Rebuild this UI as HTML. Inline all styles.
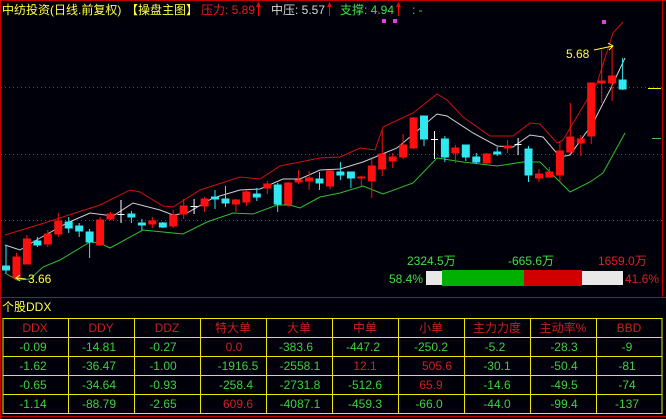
<!DOCTYPE html>
<html><head><meta charset="utf-8"><style>
html,body{margin:0;padding:0;background:#000008;width:666px;height:419px;overflow:hidden}
svg{display:block}
text{font-family:"Liberation Sans","Noto Sans CJK SC",sans-serif;font-size:12px}
</style></head><body>
<svg width="666" height="419" viewBox="0 0 666 419" xmlns="http://www.w3.org/2000/svg">
<rect width="666" height="419" fill="#00000a"/>
<line x1="0" y1="0.5" x2="666" y2="0.5" stroke="#c00000"/>
<line x1="0.5" y1="0" x2="0.5" y2="419" stroke="#c00000"/>
<line x1="662.5" y1="0" x2="662.5" y2="297" stroke="#c00000"/>
<line x1="0" y1="297.5" x2="666" y2="297.5" stroke="#c00000"/>
<line x1="0" y1="416.5" x2="666" y2="416.5" stroke="#c00000"/>
<text x="2" y="14" fill="#ffff40">中纺投资(日线.前复权)</text>
<text x="126" y="14" fill="#ffff40">【操盘主图】</text>
<text x="201" y="14" fill="#e02020">压力: 5.89</text>
<text x="271" y="14" fill="#d8d8d8">中压: 5.57</text>
<text x="340" y="14" fill="#40e040">支撑: 4.94</text>
<text x="412" y="14" fill="#40e040">: -</text>
<g stroke="#ff0000" stroke-width="1"><line x1="258.5" y1="3" x2="258.5" y2="16"/><line x1="329.5" y1="3" x2="329.5" y2="16"/><line x1="398.5" y1="3" x2="398.5" y2="16"/></g>
<g fill="#ff0000"><path d="M256 7 L258.5 2 L261 7Z"/><path d="M327 7 L329.5 2 L332 7Z"/><path d="M396 7 L398.5 2 L401 7Z"/></g>
<g fill="#e040e0"><rect x="382" y="19" width="4" height="4"/><rect x="393" y="19" width="4" height="4"/><rect x="602" y="20" width="4" height="4"/></g>
<g stroke="#c02020" stroke-dasharray="1,3"><line x1="1" y1="87.5" x2="662" y2="87.5"/><line x1="1" y1="154.5" x2="662" y2="154.5"/><line x1="1" y1="220.5" x2="662" y2="220.5"/></g>
<line x1="648" y1="88.5" x2="661" y2="88.5" stroke="#ffff00"/>
<line x1="652" y1="138.5" x2="661" y2="138.5" stroke="#40c040"/>
<polyline fill="none" stroke="#d01010" points="5,235 38,225 100,205 130,190 140,192 163,206 173,207 200,190 240,177 260,179 280,166 300,162 320,158 340,157 360,148 375,150 383,127 413,113 437,94 447,100 463,117 490,136 513,136 530,123 540,124 557,143 563,140 597,83 613,33 623,22"/>
<polyline fill="none" stroke="#d0d0d0" points="5,245 20,250 33,242 67,223 90,213 113,216 133,203 160,210 173,215 187,213 213,198 240,190 260,189 283,179 300,179 320,170 340,169 363,162 397,148 437,114 447,116 473,133 497,146 513,147 530,135 543,137 560,157 570,155 593,123 610,90 625,58"/>
<polyline fill="none" stroke="#30c030" points="5,273 17,280 30,279 43,267 60,260 90,242 100,243 110,248 143,230 173,233 183,234 207,222 233,213 253,214 277,205 290,205 300,208 320,197 340,193 363,186 383,194 413,183 437,158 463,162 497,166 523,162 540,162 570,192 590,182 603,173 625,133"/>
<g stroke="#ff1010" fill="#ff1010">
<line x1="16.5" y1="253" x2="16.5" y2="280"/><rect x="13" y="257" width="7" height="21"/>
<line x1="26.9" y1="235" x2="26.9" y2="264"/><rect x="23.4" y="239" width="7" height="25"/>
<line x1="47.8" y1="230" x2="47.8" y2="247"/><rect x="44.3" y="234" width="7" height="10"/>
<line x1="58.3" y1="213" x2="58.3" y2="237"/><rect x="54.8" y="221" width="7" height="13"/>
<line x1="100.1" y1="217" x2="100.1" y2="246"/><rect x="96.6" y="220" width="7" height="25"/>
<line x1="110.5" y1="212" x2="110.5" y2="220"/><rect x="107" y="214" width="7" height="5"/>
<line x1="152.3" y1="217" x2="152.3" y2="228"/><rect x="148.8" y="221" width="7" height="3"/>
<line x1="173.2" y1="210" x2="173.2" y2="228"/><rect x="169.7" y="215" width="7" height="11"/>
<line x1="183.7" y1="199" x2="183.7" y2="219"/><rect x="180.2" y="206" width="7" height="8"/>
<line x1="204.6" y1="197" x2="204.6" y2="212"/><rect x="201.1" y="199" width="7" height="7"/>
<line x1="235.9" y1="199" x2="235.9" y2="212"/><rect x="232.4" y="200" width="7" height="4"/>
<line x1="246.4" y1="190" x2="246.4" y2="206"/><rect x="242.9" y="192" width="7" height="10"/>
<line x1="267.3" y1="181" x2="267.3" y2="194"/><rect x="263.8" y="184" width="7" height="4"/>
<line x1="288.2" y1="182" x2="288.2" y2="207"/><rect x="284.7" y="183" width="7" height="21"/>
<line x1="298.6" y1="170" x2="298.6" y2="184"/><rect x="295.1" y="180" width="7" height="2"/>
<line x1="309.1" y1="171" x2="309.1" y2="190"/><rect x="305.6" y="178" width="7" height="3"/>
<line x1="330" y1="170" x2="330" y2="189"/><rect x="326.5" y="171" width="7" height="15"/>
<line x1="361.3" y1="176" x2="361.3" y2="186"/><rect x="357.8" y="177" width="7" height="1"/>
<line x1="371.8" y1="159" x2="371.8" y2="198"/><rect x="368.3" y="166" width="7" height="15"/>
<line x1="382.2" y1="130" x2="382.2" y2="176"/><rect x="378.7" y="154" width="7" height="15"/>
<line x1="392.7" y1="153" x2="392.7" y2="168"/><rect x="389.2" y="157" width="7" height="4"/>
<line x1="403.1" y1="134" x2="403.1" y2="159"/><rect x="399.6" y="145" width="7" height="12"/>
<line x1="413.6" y1="117" x2="413.6" y2="149"/><rect x="410.1" y="118" width="7" height="30"/>
<line x1="455.4" y1="145" x2="455.4" y2="163"/><rect x="451.9" y="148" width="7" height="5"/>
<line x1="486.7" y1="153" x2="486.7" y2="164"/><rect x="483.2" y="154" width="7" height="9"/>
<line x1="507.6" y1="140" x2="507.6" y2="153"/><rect x="504.1" y="146" width="7" height="2"/>
<line x1="539" y1="169" x2="539" y2="182"/><rect x="535.5" y="174" width="7" height="4"/>
<line x1="549.4" y1="167" x2="549.4" y2="178"/><rect x="545.9" y="172" width="7" height="5"/>
<line x1="559.9" y1="142" x2="559.9" y2="182"/><rect x="556.4" y="151" width="7" height="24"/>
<line x1="570.3" y1="103" x2="570.3" y2="153"/><rect x="566.8" y="137" width="7" height="15"/>
<line x1="580.8" y1="135" x2="580.8" y2="156"/><rect x="577.3" y="139" width="7" height="4"/>
<line x1="591.2" y1="83" x2="591.2" y2="144"/><rect x="587.7" y="83" width="7" height="53"/>
<line x1="601.7" y1="50" x2="601.7" y2="103"/><rect x="598.2" y="81" width="7" height="2"/>
<line x1="612.1" y1="46" x2="612.1" y2="101"/><rect x="608.6" y="76" width="7" height="7"/>
</g>
<g stroke="#30e8f0" fill="#30e8f0">
<line x1="6" y1="245" x2="6" y2="273"/><rect x="2.5" y="266" width="7" height="4"/>
<line x1="37.4" y1="237" x2="37.4" y2="247"/><rect x="33.9" y="241" width="7" height="4"/>
<line x1="68.7" y1="217" x2="68.7" y2="233"/><rect x="65.2" y="222" width="7" height="6"/>
<line x1="79.2" y1="223" x2="79.2" y2="237"/><rect x="75.7" y="226" width="7" height="5"/>
<line x1="89.6" y1="229" x2="89.6" y2="258"/><rect x="86.1" y="232" width="7" height="10"/>
<line x1="131.4" y1="211" x2="131.4" y2="223"/><rect x="127.9" y="214" width="7" height="3"/>
<line x1="141.9" y1="219" x2="141.9" y2="230"/><rect x="138.4" y="223" width="7" height="2"/>
<line x1="162.8" y1="222" x2="162.8" y2="228"/><rect x="159.3" y="223" width="7" height="4"/>
<line x1="215" y1="190" x2="215" y2="209"/><rect x="211.5" y="197" width="7" height="2"/>
<line x1="225.5" y1="186" x2="225.5" y2="207"/><rect x="222" y="199" width="7" height="4"/>
<line x1="256.8" y1="188" x2="256.8" y2="201"/><rect x="253.3" y="194" width="7" height="3"/>
<line x1="277.7" y1="183" x2="277.7" y2="212"/><rect x="274.2" y="185" width="7" height="19"/>
<line x1="319.5" y1="172" x2="319.5" y2="190"/><rect x="316" y="179" width="7" height="4"/>
<line x1="340.4" y1="162" x2="340.4" y2="180"/><rect x="336.9" y="172" width="7" height="3"/>
<line x1="350.9" y1="172" x2="350.9" y2="188"/><rect x="347.4" y="172" width="7" height="6"/>
<line x1="424" y1="116" x2="424" y2="146"/><rect x="420.5" y="116" width="7" height="23"/>
<line x1="444.9" y1="136" x2="444.9" y2="162"/><rect x="441.4" y="139" width="7" height="18"/>
<line x1="465.8" y1="145" x2="465.8" y2="161"/><rect x="462.3" y="145" width="7" height="12"/>
<line x1="476.3" y1="153" x2="476.3" y2="164"/><rect x="472.8" y="157" width="7" height="5"/>
<line x1="497.2" y1="147" x2="497.2" y2="156"/><rect x="493.7" y="152" width="7" height="2"/>
<line x1="528.5" y1="146" x2="528.5" y2="182"/><rect x="525" y="149" width="7" height="26"/>
<line x1="622.6" y1="58" x2="622.6" y2="90"/><rect x="619.1" y="80" width="7" height="9"/>
</g>
<g stroke="#ffffff">
<line x1="121" y1="200" x2="121" y2="223"/><line x1="117.5" y1="214.5" x2="124.5" y2="214.5"/>
<line x1="194.1" y1="199" x2="194.1" y2="214"/><line x1="190.6" y1="206.5" x2="197.6" y2="206.5"/>
<line x1="434.5" y1="131" x2="434.5" y2="159"/><line x1="431" y1="139.5" x2="438" y2="139.5"/>
<line x1="518.1" y1="138" x2="518.1" y2="155"/><line x1="514.6" y1="144.5" x2="521.6" y2="144.5"/>
</g>
<text x="566" y="58" fill="#ffff40">5.68</text>
<path d="M594 50 L613 46 M608 43 L613 46 L609 50" stroke="#ffff40" fill="none"/>
<text x="28" y="283" fill="#ffff40">3.66</text>
<path d="M26 279 L16 278 M20 275 L16 278 L20 281" stroke="#ffff40" fill="none"/>
<text x="407" y="265" fill="#40e040">2324.5万</text>
<text x="508" y="265" fill="#40e040">-665.6万</text>
<text x="598" y="265" fill="#e02020">1659.0万</text>
<text x="389" y="283" fill="#40e040">58.4%</text>
<text x="625" y="283" fill="#e02020">41.6%</text>
<rect x="426" y="271" width="197" height="14" fill="#e8e8e8"/>
<rect x="442" y="270" width="82" height="16" fill="#00b000"/>
<rect x="524" y="270" width="58" height="16" fill="#d00000"/>
<text x="2" y="311" fill="#ffff40">个股DDX</text>
<g stroke="#e8e800" fill="none">
<rect x="3" y="318.5" width="659" height="95"/>
<line x1="3" y1="337.5" x2="662" y2="337.5"/>
<line x1="3" y1="356.5" x2="662" y2="356.5"/>
<line x1="3" y1="375.5" x2="662" y2="375.5"/>
<line x1="3" y1="394.5" x2="662" y2="394.5"/>
<line x1="68.5" y1="318" x2="68.5" y2="413"/><line x1="134.5" y1="318" x2="134.5" y2="413"/><line x1="200.5" y1="318" x2="200.5" y2="413"/><line x1="266.5" y1="318" x2="266.5" y2="413"/><line x1="332.5" y1="318" x2="332.5" y2="413"/><line x1="398.5" y1="318" x2="398.5" y2="413"/><line x1="464.5" y1="318" x2="464.5" y2="413"/><line x1="530.5" y1="318" x2="530.5" y2="413"/><line x1="596.5" y1="318" x2="596.5" y2="413"/>
</g>
<g text-anchor="middle" fill="#c82020">
<text x="35" y="332">DDX</text><text x="101" y="332">DDY</text><text x="167" y="332">DDZ</text><text x="233" y="332">特大单</text><text x="299" y="332">大单</text><text x="365" y="332">中单</text><text x="431" y="332">小单</text><text x="497" y="332">主力力度</text><text x="563" y="332">主动率%</text><text x="629" y="332">BBD</text>
</g>
<g text-anchor="middle" fill="#40d040">
<text x="33" y="351">-0.09</text><text x="99" y="351">-14.81</text><text x="163" y="351">-0.27</text><text x="234" y="351" fill="#d02020">0.0</text><text x="296" y="351">-383.6</text><text x="363" y="351">-447.2</text><text x="431" y="351">-250.2</text><text x="495" y="351">-5.2</text><text x="564" y="351">-28.3</text><text x="627" y="351">-9</text>
<text x="33" y="370">-1.62</text><text x="99" y="370">-36.47</text><text x="163" y="370">-1.00</text><text x="238" y="370">-1916.5</text><text x="300" y="370">-2558.1</text><text x="365" y="370" fill="#d02020">12.1</text><text x="437" y="370" fill="#d02020">505.6</text><text x="497" y="370">-30.1</text><text x="564" y="370">-50.4</text><text x="627" y="370">-81</text>
<text x="33" y="389">-0.65</text><text x="99" y="389">-34.64</text><text x="163" y="389">-0.93</text><text x="236" y="389">-258.4</text><text x="300" y="389">-2731.8</text><text x="365" y="389">-512.6</text><text x="431" y="389" fill="#d02020">65.9</text><text x="497" y="389">-14.6</text><text x="564" y="389">-49.5</text><text x="627" y="389">-74</text>
<text x="33" y="408">-1.14</text><text x="99" y="408">-88.79</text><text x="163" y="408">-2.65</text><text x="238" y="408" fill="#d02020">609.6</text><text x="300" y="408">-4087.1</text><text x="365" y="408">-459.3</text><text x="429" y="408">-66.0</text><text x="497" y="408">-44.0</text><text x="564" y="408">-99.4</text><text x="627" y="408">-137</text>
</g>
</svg>
</body></html>
